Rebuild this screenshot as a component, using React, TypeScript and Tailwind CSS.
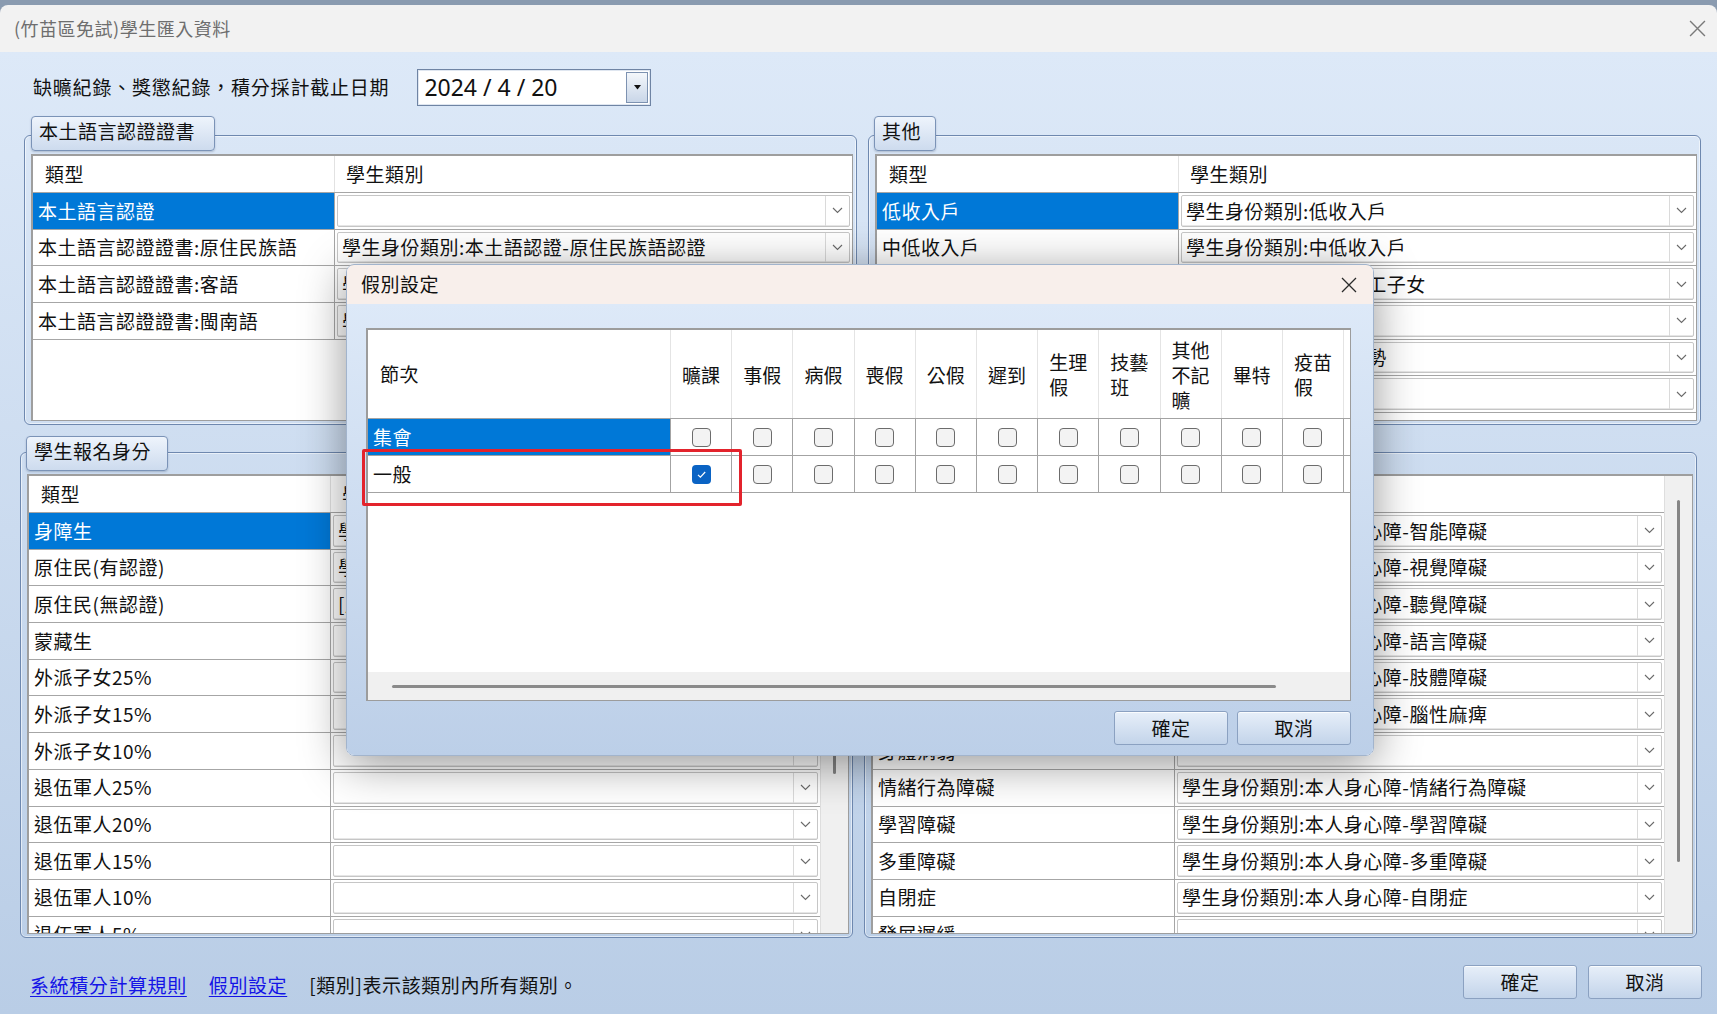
import clsx from "clsx";

type Row = { label: string; value?: string; selected?: boolean };

const topLeftRows: Row[] = [
  { label: "本土語言認證", value: "", selected: true },
  { label: "本土語言認證證書:原住民族語", value: "學生身份類別:本土語認證-原住民族語認證" },
  { label: "本土語言認證證書:客語", value: "學生身份類別:本土語認證-客語認證" },
  { label: "本土語言認證證書:閩南語", value: "學生身份類別:本土語認證-閩南語認證" },
];

const topRightRows: Row[] = [
  { label: "低收入戶", value: "學生身份類別:低收入戶", selected: true },
  { label: "中低收入戶", value: "學生身份類別:中低收入戶" },
  { label: "失業勞工子女", value: "學生身份類別:失業勞工子女" },
  { label: "特殊境遇家庭", value: "" },
  { label: "經濟弱勢", value: "學生身份類別:經濟弱勢" },
  { label: "其他", value: "" },
];

const bottomLeftRows: Row[] = [
  { label: "身障生", value: "學生身份類別:本人身心障", selected: true },
  { label: "原住民(有認證)", value: "學生身份類別:原住民" },
  { label: "原住民(無認證)", value: "[原住民]" },
  { label: "蒙藏生" },
  { label: "外派子女25%" },
  { label: "外派子女15%" },
  { label: "外派子女10%" },
  { label: "退伍軍人25%" },
  { label: "退伍軍人20%" },
  { label: "退伍軍人15%" },
  { label: "退伍軍人10%" },
  { label: "退伍軍人5%" },
];

const bottomRightRows: Row[] = [
  { label: "智能障礙", value: "學生身份類別:本人身心障-智能障礙" },
  { label: "視覺障礙", value: "學生身份類別:本人身心障-視覺障礙" },
  { label: "聽覺障礙", value: "學生身份類別:本人身心障-聽覺障礙" },
  { label: "語言障礙", value: "學生身份類別:本人身心障-語言障礙" },
  { label: "肢體障礙", value: "學生身份類別:本人身心障-肢體障礙" },
  { label: "腦性麻痺", value: "學生身份類別:本人身心障-腦性麻痺" },
  { label: "身體病弱", value: "" },
  { label: "情緒行為障礙", value: "學生身份類別:本人身心障-情緒行為障礙" },
  { label: "學習障礙", value: "學生身份類別:本人身心障-學習障礙" },
  { label: "多重障礙", value: "學生身份類別:本人身心障-多重障礙" },
  { label: "自閉症", value: "學生身份類別:本人身心障-自閉症" },
  { label: "發展遲緩", value: "" },
];

const leaveCols = ["曠課", "事假", "病假", "喪假", "公假", "遲到", "生理假", "技藝班", "其他不記曠", "畢特", "疫苗假"];

function Chevron() {
  return (
    <svg width="11" height="7" viewBox="0 0 11 7">
      <path d="M1 1l4.5 4.5L10 1" fill="none" stroke="#6a6a6a" strokeWidth="1.1" />
    </svg>
  );
}

function CloseX({ color, size }: { color: string; size: number }) {
  return (
    <svg width={size} height={size} viewBox="0 0 16 16">
      <path d="M1 1l14 14M15 1L1 15" stroke={color} strokeWidth="1.3" fill="none" />
    </svg>
  );
}

function Combo({ value }: { value?: string }) {
  return (
    <div className="flex h-full items-stretch rounded-[2px] border border-[#c6c6c6] bg-white shadow-[inset_0_-1px_0_#e6e6e6]">
      <div className="flex min-w-0 flex-1 items-center overflow-hidden whitespace-nowrap pl-[4px]">{value}</div>
      <div className="flex w-[24px] shrink-0 items-center justify-center border-l border-[#dadada]">
        <Chevron />
      </div>
    </div>
  );
}

function GridRow({ row }: { row: Row }) {
  return (
    <div className="flex h-[36.7px] shrink-0 border-b border-[#a6a6a6]">
      <div
        className={clsx(
          "flex w-[302px] shrink-0 items-center overflow-hidden whitespace-nowrap border-r border-[#a6a6a6] pl-[5px]",
          row.selected ? "bg-[#0078d7] text-white" : "bg-white"
        )}
      >
        {row.label}
      </div>
      <div className="min-w-0 flex-1 py-[2px] pl-[2px] pr-[2px]">
        <Combo value={row.value} />
      </div>
    </div>
  );
}

function Grid({ rows, thumb }: { rows: Row[]; thumb?: string }) {
  return (
    <div className="flex h-full overflow-hidden border-b border-l-2 border-r border-t-2 border-[#9e9e9e] bg-white">
      <div className="flex min-w-0 flex-1 flex-col">
        <div className="flex h-[37px] shrink-0 border-b border-[#a6a6a6]">
          <div className="flex w-[302px] shrink-0 items-center border-r border-[#e2e2e2] pl-[12px]">類型</div>
          <div className="flex items-center pl-[11px]">學生類別</div>
        </div>
        {rows.map((r) => (
          <GridRow key={r.label} row={r} />
        ))}
      </div>
      {thumb && (
        <div className="flex w-[28px] shrink-0 justify-center border-l border-[#dedede] bg-[#f0f0f0]">
          <div className={clsx("w-[3px] rounded-full bg-[#858585]", thumb)} />
        </div>
      )}
    </div>
  );
}

function Group({
  title,
  tabCls,
  boxCls,
  children,
}: {
  title: string;
  tabCls: string;
  boxCls: string;
  children: React.ReactNode;
}) {
  return (
    <div className="flex w-[833px] flex-col">
      <div
        className={clsx(
          "relative z-10 flex h-[35px] items-center rounded-[4px] border border-[#7b93b7] bg-gradient-to-b from-[#eef4fc] to-[#cddbee] pb-[4px] pl-[7px] shadow-[0_1px_2px_rgba(40,60,90,0.25)]",
          tabCls
        )}
      >
        {title}
      </div>
      <div
        className={clsx(
          "rounded-[6px] border border-[#6e88af] pb-[3px] pl-[6px] pr-[3px] shadow-[inset_0_0_0_1px_rgba(255,255,255,0.55)]",
          boxCls
        )}
      >
        {children}
      </div>
    </div>
  );
}

function Checkbox({ checked }: { checked?: boolean }) {
  if (checked) {
    return (
      <div className="flex h-[19px] w-[19px] items-center justify-center rounded-[4px] bg-[#0a63c4]">
        <svg width="13" height="13" viewBox="0 0 13 13">
          <path d="M3 6.8l2.4 2.4L10.2 4" fill="none" stroke="white" strokeWidth="1.2" />
        </svg>
      </div>
    );
  }
  return <div className="h-[19px] w-[19px] rounded-[4px] border-[1.5px] border-[#6c6c6c] bg-[#f3f3f3]" />;
}

function LeaveRow({ label, selected, first }: { label: string; selected?: boolean; first?: boolean }) {
  return (
    <div className="flex h-[37px] shrink-0 border-b border-[#a3a3a3]">
      <div
        className={clsx(
          "flex w-[303px] shrink-0 items-center border-r border-[#a3a3a3] pl-[5px]",
          selected ? "bg-[#0078d7] text-white" : "bg-white"
        )}
      >
        {label}
      </div>
      {leaveCols.map((c, i) => (
        <div key={c} className="flex w-[61.2px] shrink-0 items-center justify-center border-r border-[#a3a3a3]">
          <Checkbox checked={!first && i === 0} />
        </div>
      ))}
      <div className="flex-1" />
    </div>
  );
}

function Button({ label }: { label: string }) {
  return (
    <div className="flex h-[34px] w-[114px] items-center justify-center rounded-[3px] border border-[#8ba1c1] bg-gradient-to-b from-[#e7eff9] to-[#c3d4ea] shadow-[inset_0_1px_0_rgba(255,255,255,0.8)]">
      {label}
    </div>
  );
}

function LeaveDialog() {
  return (
    <div className="absolute left-[346px] top-[264px] z-20 flex h-[492px] w-[1028px] flex-col overflow-hidden rounded-[8px] border border-[#a2b4cc] shadow-[0_8px_46px_rgba(0,0,0,0.42)]">
      <div className="flex h-[39px] shrink-0 items-center justify-between bg-[#f8efeb] pl-[14px] pr-[16px]">
        <span>假別設定</span>
        <CloseX color="#2a2a2a" size={16} />
      </div>
      <div className="flex flex-1 flex-col bg-gradient-to-b from-[#dde9f8] to-[#bccfe8] pl-[19px] pr-[22px] pt-[24px]">
        <div className="flex h-[373px] flex-col border-b border-l-2 border-r border-t-2 border-[#9c9c9c] bg-white">
          <div className="flex h-[89px] shrink-0 border-b border-[#a3a3a3]">
            <div className="flex w-[303px] shrink-0 items-center border-r border-[#e4e4e4] pl-[12px]">節次</div>
            {leaveCols.map((c) => (
              <div
                key={c}
                className="flex w-[61.2px] shrink-0 items-center border-r border-[#e4e4e4] pl-[11px] pr-[8px] leading-[25px] tracking-normal"
              >
                {c}
              </div>
            ))}
            <div className="flex-1" />
          </div>
          <LeaveRow label="集會" selected first />
          <LeaveRow label="一般" />
          <div className="flex-1" />
          <div className="flex h-[28px] shrink-0 items-center bg-[#f0f0f0] pl-[24px]">
            <div className="h-[3px] w-[884px] rounded-full bg-[#8a8a8a]" />
          </div>
        </div>
        <div className="mt-[10px] flex justify-end gap-[9px]">
          <Button label="確定" />
          <Button label="取消" />
        </div>
      </div>
    </div>
  );
}

export default function App() {
  return (
    <div className="relative h-[1014px] w-[1717px] overflow-hidden bg-[#8a9bb0] font-['Noto_Sans_CJK_TC','Noto_Sans',sans-serif] text-[19px] tracking-[0.5px] text-[#111]">
      <div className="h-[5px]" />
      <div className="flex h-[1009px] flex-col overflow-hidden rounded-t-[8px]">
        {/* title bar */}
        <div className="flex h-[47px] shrink-0 items-center justify-between bg-[#f2f2f2] pl-[14px] pr-[11px]">
          <span className="text-[18px] text-[#6e6e6e]">(竹苗區免試)學生匯入資料</span>
          <CloseX color="#7a7a7a" size={17} />
        </div>

        <div className="flex flex-1 flex-col bg-gradient-to-b from-[#dde9f8] to-[#b9cde6]">
          {/* date row */}
          <div className="ml-[33px] mt-[17px] flex h-[37px] items-center gap-[28px]">
            <span className="tracking-[0.8px]">缺曠紀錄、獎懲紀錄，積分採計截止日期</span>
            <div className="flex h-[37px] w-[234px] items-center border border-[#6f84a4] bg-white pl-[6px] pr-[2px] shadow-[inset_0_0_0_1px_#dfe6f0]">
              <span className="flex-1 font-['Noto_Sans',sans-serif] text-[23px] leading-none tracking-normal">2024 / 4 / 20</span>
              <div className="flex h-[31px] w-[22px] items-center justify-center border border-[#7d92b1] bg-gradient-to-b from-[#f4f7fb] to-[#c9d6e8]">
                <svg width="7" height="5" viewBox="0 0 7 5">
                  <path d="M0 0h7L3.5 4.5z" fill="#111" />
                </svg>
              </div>
            </div>
          </div>

          {/* top groups */}
          <div className="ml-[24px] mt-[10px] flex gap-[11px]">
            <Group title="本土語言認證證書" tabCls="ml-[7px] w-[184px]" boxCls="-mt-[16px] h-[290px] pt-[18px]">
              <Grid rows={topLeftRows} />
            </Group>
            <Group title="其他" tabCls="ml-[6px] w-[62px]" boxCls="-mt-[16px] h-[290px] pt-[18px]">
              <Grid rows={topRightRows} />
            </Group>
          </div>

          {/* bottom groups */}
          <div className="ml-[20px] mt-[11px] flex gap-[11px]">
            <Group title="學生報名身分" tabCls="ml-[6px] w-[142px]" boxCls="-mt-[19px] h-[486px] pt-[21px]">
              <Grid rows={bottomLeftRows} thumb="mt-[24px] h-[274px]" />
            </Group>
            <Group title="本人身心障礙" tabCls="ml-[6px] w-[142px]" boxCls="-mt-[19px] h-[486px] pt-[21px]">
              <Grid rows={bottomRightRows} thumb="mt-[24px] h-[362px]" />
            </Group>
          </div>

          {/* footer */}
          <div className="mt-[27px] flex items-center justify-between pl-[30px] pr-[15px]">
            <div className="flex items-center gap-[22px] pt-[6px] tracking-[0.6px]">
              <span className="text-[#1414e6] underline underline-offset-[3px]">系統積分計算規則</span>
              <span className="text-[#1414e6] underline underline-offset-[3px]">假別設定</span>
              <span>[類別]表示該類別內所有類別。</span>
            </div>
            <div className="flex gap-[11px]">
              <Button label="確定" />
              <Button label="取消" />
            </div>
          </div>
        </div>
      </div>

      <LeaveDialog />

      {/* highlight annotation */}
      <div className="absolute left-[362px] top-[449px] z-30 h-[57px] w-[380px] rounded-[2px] border-[3px] border-[#e3232c]" />
    </div>
  );
}
